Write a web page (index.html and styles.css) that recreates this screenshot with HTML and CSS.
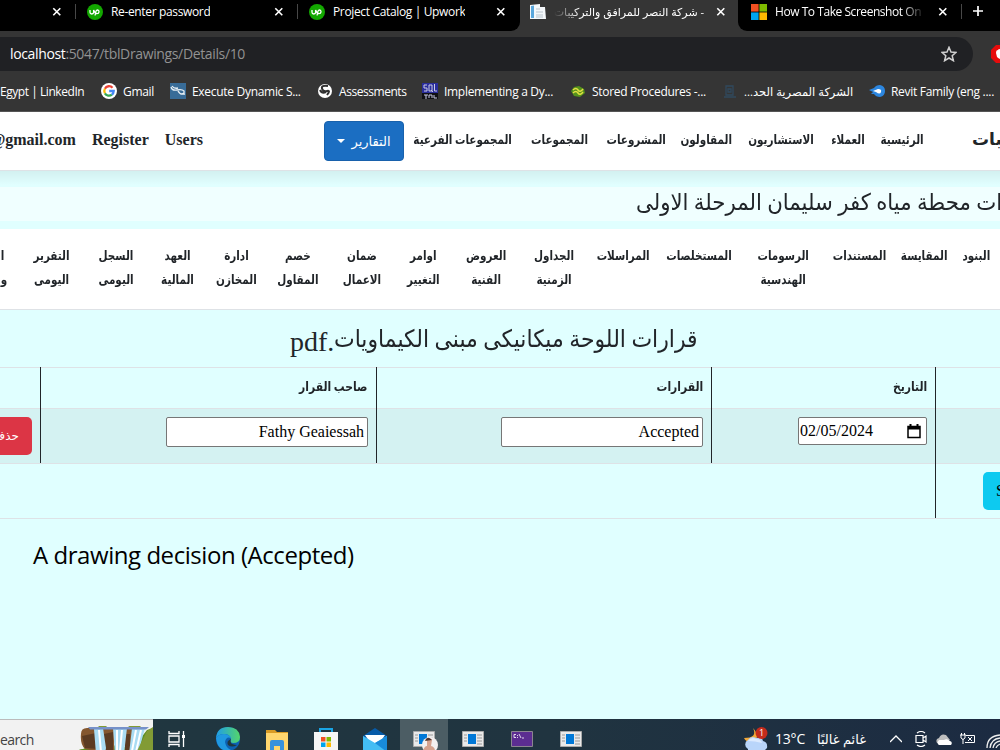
FILE: index.html
```
<!DOCTYPE html>
<html lang="ar">
<head>
  <meta charset="UTF-8">
  <title>شركة النصر للمرافق والتركيبات</title>
  <link rel="stylesheet" href="styles.css">
</head>
<body>
  <svg class="defs" width="0" height="0">
    <symbol id="close" viewBox="0 0 10 10"><path d="M1.3 1.3l7 7M8.3 1.3l-7 7" stroke="#fff" stroke-width="1.6"/></symbol>
    <symbol id="upwork" viewBox="0 0 16 16"><circle cx="8" cy="8" r="8" fill="#13a800"/><path d="M3 6v2.2c0 2.4 3.6 2.4 3.6 0V6c.8 2.4 1.8 3.7 3.4 3.7 2.500 0 2.700-3.700.3-3.700-1.400 0-1.700 1-2.200 5.500" fill="none" stroke="#fff" stroke-width="1.300"/></symbol>
    <symbol id="window" viewBox="0 0 22 16"><path fill="#e9e9e9" stroke="#aaa" d="M.5.5h21v15H.5z"/><path fill="#0078d7" d="M6 3h8v10H6z"/><path d="M2 4h3M2 7h3M2 10h3M15 4h5M15 7h5M15 10h5M15 13h5" stroke="#999"/></symbol>
  </svg>

  <header class="browser">
    <div class="tabs">
      <div class="tab first"><svg class="x"><use href="#close"/></svg></div>
      <div class="tab"><svg class="fav"><use href="#upwork"/></svg><span class="title">Re-enter password</span><svg class="x"><use href="#close"/></svg></div>
      <div class="tab no-line"><svg class="fav"><use href="#upwork"/></svg><span class="title">Project Catalog | Upwork</span><svg class="x"><use href="#close"/></svg></div>
      <div class="tab active">
        <svg class="fav" viewBox="0 0 16 16"><path fill="#f4f8fb" d="M0 1l10-1v3h5l1 12H0z"/><path fill="#5aa7dc" d="M1 2l3-.5V14H1z"/><path d="M6 5h4M6 8h7M6 11h7M6 13h7" stroke="#b9c4cc"/></svg>
        <span class="title ar" dir="rtl">- شركة النصر للمرافق والتركيبات</span><svg class="x"><use href="#close"/></svg>
      </div>
      <div class="tab last">
        <svg class="fav" viewBox="0 0 16 16"><path fill="#f25022" d="M0 0h7.600v7.600H0z"/><path fill="#7fba00" d="M8.400 0H16v7.600H8.400z"/><path fill="#00a4ef" d="M0 8.400h7.600V16H0z"/><path fill="#ffb900" d="M8.400 8.400H16V16H8.400z"/></svg>
        <span class="title fade">How To Take Screenshot On</span><svg class="x"><use href="#close"/></svg>
      </div>
      <svg class="plus" viewBox="0 0 12 12"><path d="M6 1v10M1 6h10" stroke="#fff" stroke-width="1.700"/></svg>
    </div>

    <div class="toolbar">
      <div class="address">
        <span class="url"><b>localhost</b>:5047/tblDrawings/Details/10</span>
        <svg class="star" viewBox="0 0 16 16"><path d="M8 1.300l2 4.700 5 .4-3.800 3.300 1.200 5L8 12l-4.400 2.700 1.200-5L1 6.400 6 6z" fill="none" stroke="#d0d0d0" stroke-width="1.500"/></svg>
      </div>
      <svg class="blocker" viewBox="0 0 18 18"><path fill="#e60c0c" d="M5 0h8l5 5v8l-5 5H5l-5-5V5z"/><path fill="#fff" d="M5 8q0-3 2-3 1-2 3 0 3-1 3 2v5q-3 4-7 0z"/></svg>
    </div>

    <div class="bookmarks">
      <span class="bm b1">Egypt | LinkedIn</span>
      <span class="bm b2"><svg viewBox="0 0 16 16"><circle cx="8" cy="8" r="8" fill="#fff"/><g fill="none" stroke-width="2.300"><path d="M11.500 4.700A4.700 4.700 0 0 0 3.900 5.700" stroke="#ea4335"/><path d="M3.900 5.700a4.700 4.700 0 0 0 0 4.600" stroke="#fbbc05"/><path d="M3.900 10.300a4.700 4.700 0 0 0 7 1.300" stroke="#34a853"/><path d="M10.900 11.600A4.700 4.700 0 0 0 12.700 8H8.200" stroke="#4285f4"/></g></svg>Gmail</span>
      <span class="bm b3"><svg viewBox="0 0 16 16"><path fill="#386c98" d="M0 0h16v16H0z"/><path d="M1 4q1 4 6 3 5-1 7 1 1 3-4 3M2 3q2 3 6 2M8 8q2 4 7 3" fill="none" stroke="#e6eef4" stroke-width="1.300"/></svg>Execute Dynamic S...</span>
      <span class="bm b4"><svg viewBox="0 0 16 16"><circle cx="8" cy="8" r="7" fill="#fff"/><path d="M11 3Q4 2 5 5.500T10 8t0 4M3 7q2 4 6 2" fill="none" stroke="#303030" stroke-width="2"/></svg>Assessments</span>
      <span class="bm b5"><svg viewBox="0 0 16 16"><path fill="#2a2d9b" d="M0 0h16v10H0z"/><path fill="#101014" d="M0 10h16v6H0z"/><path d="M5 2H2v3h3v3H2M7 2h3v6H7zM9 7l2 2M12.500 1v7H15M2 12h4M4 12v4M7 15v-3h3v3M12 12v3h3" fill="none" stroke="#c9cbe4"/></svg>Implementing a Dy...</span>
      <span class="bm b6"><svg viewBox="0 0 16 16"><path fill="#55921c" d="M1 8l3-4 5-1 5 3 1 4-5 4-6-1z"/><path d="M3 7q3-3 5 0t5-1M3 10q3-3 5 0t5-1" fill="none" stroke="#e2df42" stroke-width="1.500"/></svg>Stored Procedures -...</span>
      <span class="bm b7"><svg viewBox="0 0 16 16"><path d="M4 3h7v9H4zM2 14h12M6 6h3v3H6z" fill="none" stroke="#31495e" stroke-width="1.300"/></svg><i dir="rtl">الشركة المصرية الحد...</i></span>
      <span class="bm b8"><svg viewBox="0 0 16 16"><path fill="#2c86df" d="M0 7l5-2q2-3 6-3 5 1 5 6t-5 6q-4 0-6-3H2l2-2z"/><path fill="#fff" d="M4 8l5-2q4 0 3 3t-5 0z"/></svg>Revit Family (eng ....</span>
    </div>
  </header>

  <nav class="navbar">
    <div class="account"><span>@gmail.com</span><span>Register</span><span>Users</span></div>
    <div class="menu" dir="rtl">
      <strong class="brand">يبات</strong>
      <a>الرئيسية</a>
      <a>العملاء</a>
      <a>الاستشاريون</a>
      <a>المقاولون</a>
      <a>المشروعات</a>
      <a>المجموعات</a>
      <a>المجموعات الفرعية</a>
      <button class="reports">التقارير <i class="caret"></i></button>
    </div>
  </nav>

  <section class="project"><h2><span dir="rtl">ات محطة مياه كفر سليمان المرحلة الاولى</span></h2></section>

  <nav class="subnav" dir="rtl">
    <a>البنود</a>
    <a>المقايسة</a>
    <a>المستندات</a>
    <a>الرسومات<br>الهندسية</a>
    <a>المستخلصات</a>
    <a>المراسلات</a>
    <a>الجداول<br>الزمنية</a>
    <a>العروض<br>الفنية</a>
    <a>اوامر<br>التغيير</a>
    <a>ضمان<br>الاعمال</a>
    <a>خصم<br>المقاول</a>
    <a>ادارة<br>المخازن</a>
    <a>العهد<br>المالية</a>
    <a>السجل<br>اليومى</a>
    <a>التقرير<br>اليومى</a>
    <a class="cut">ا<br>و</a>
  </nav>

  <main>
    <h3 dir="rtl"><span class="name">قرارات اللوحة ميكانيكى مبنى الكيماويات</span><span dir="ltr">pdf.</span></h3>
    <div class="row head">
      <div></div>
      <div><span>صاحب القرار</span></div>
      <div><span>القرارات</span></div>
      <div><span>التاريخ</span></div>
      <div></div>
    </div>
    <div class="row data">
      <div><button class="delete">حذف</button></div>
      <div><span class="field">Fathy Geaiessah</span></div>
      <div><span class="field">Accepted</span></div>
      <div><span class="field date">02/05/2024<svg viewBox="0 0 14 15"><path d="M1 2.500h12v11H1z" fill="none" stroke="#000" stroke-width="1.500"/><path d="M1 2h12v3.500H1zM2.500 0h2v3h-2zM9.500 0h2v3h-2z"/></svg></span></div>
      <div></div>
    </div>
    <div class="row save">
      <div></div>
      <div><button class="submit">Save</button></div>
    </div>
    <p class="caption">A drawing decision (Accepted)</p>
  </main>

  <footer class="taskbar">
    <div class="search"><span>earch</span>
      <svg viewBox="0 0 76 28"><path fill="#5f8f25" d="M0 28q0-5 6-5l14-6 36 5L70 4l6-2v26z"/><path fill="#84572f" d="M4 8q0-6 6-6h12l2 24-16-3Q3 18 4 8zM25 2h12v22H26zM48 2h8v24h-8z"/><path fill="#5b3b22" d="M5 10l14-3 2 16-13-1zM27 8l9-2v18h-9zM48 8h5v16h-5z"/><path fill="#a9dcf3" d="M17 3l9-1 3 20-1 6h-9zM36 2h14l-3 26h-9zM55 2h13l-7 26h-9z"/><path d="M22 4l2 22M40 4v22M45 4l-2 21M59 4l-4 21M64 4l-5 22" stroke="#fff" stroke-width="2"/><path fill="#7691c9" d="M11 1h61l-3 2.500H13z"/><path fill="#829b35" d="M21 1q5-5 9 0zM51 1q8-6 13 0zM70 5l6-4v24H60z"/></svg>
    </div>
    <div class="apps">
      <svg class="task" viewBox="0 0 18 16"><path d="M1 0v2.500h10V0M1 5h10v6H1zM1 16v-2.500h10V16M15.500 0v16" fill="none" stroke="#fff" stroke-width="1.300"/><path fill="#fff" d="M14 4h3v3h-3z"/></svg>
      <svg class="edge" viewBox="0 0 24 24"><defs><linearGradient id="eg"><stop stop-color="#1f9de8"/><stop offset="1" stop-color="#54d66a"/></linearGradient></defs><circle cx="12" cy="12" r="12" fill="#0d61b2"/><path fill="url(#eg)" d="M0 11Q1 0 12 0t12 10q0 6-7 6-4-1-2-4-1-5-7-5-5 0-8 4z"/><path fill="#2099e1" d="M0 11q3-4 8-4 5 0 7 4-5-2-6 4 1 6 6 8Q2 26 0 11z"/><path fill="#203740" d="M15 12q-5 2-3 6 4 3 9 0-5-.5-6-2-1-2 0-4z"/></svg>
      <svg class="folder" viewBox="0 0 22 20"><path fill="#d99b25" d="M0 0h9l2 2h11v4H0z"/><path fill="#ffd66e" d="M0 3h22v17H0z"/><path fill="#3892dc" d="M4 20v-8q0-2 2-2h10q2 0 2 2v8h-4v-4H8v4z"/></svg>
      <svg class="store" viewBox="0 0 24 24"><path d="M6 6V1h12v5" fill="none" stroke="#1aa5e5" stroke-width="2"/><path fill="#f5f5f5" d="M0 4h24v18q0 2-2 2H2q-2 0-2-2z"/><path fill="#f25022" d="M7 9h4.500v4.500H7z"/><path fill="#7fba00" d="M12.500 9H17v4.500h-4.500z"/><path fill="#00a4ef" d="M7 14.500h4.500V19H7z"/><path fill="#ffb900" d="M12.500 14.500H17V19h-4.500z"/></svg>
      <svg class="mail" viewBox="0 0 24 24"><path fill="#075ba8" d="M0 8l12-8 12 8v8H0z"/><path fill="#fff" d="M2 7h20l-6 9H8z"/><path fill="#43bdf4" d="M0 8l12 7 12-7v16H0z"/><path fill="#188bdb" d="M12 15l12-7v16z"/></svg>
      <span class="open"><svg viewBox="0 0 26 22"><use href="#window" width="22" height="16"/><circle cx="17" cy="14" r="8" fill="#f4f0f0"/><path fill="#d6a28e" d="M10 21q1-6 4-6v-6q3-3 5 0l-1 6q4 1 4 5l-5 2z"/><path fill="#4d3530" d="M12 10q2-6 7-1z"/></svg></span>
      <svg class="win w1"><use href="#window"/></svg>
      <svg class="win w2" viewBox="0 0 22 16"><path fill="#5c2d91" stroke="#8b8590" d="M.5.500h21v15H.5z"/><path d="M5 3.500H3v3h2M6.500 4v1M6.500 6v1M8 3l2 4M11 7h2" fill="none" stroke="#fff" stroke-width=".8"/></svg>
      <svg class="win w3"><use href="#window"/></svg>
    </div>
    <div class="tray">
      <svg class="weather" viewBox="0 0 25 24"><path fill="#f2a93a" d="M10 1q5 10-9 10 2 5 9 4 8-5 0-14z"/><path fill="#b9d5fa" d="M5 22a5 5 0 0 1 0-9q3-5 8-2 6-2 7 3 5 1 4 7l-3 3H5z"/><path fill="#dceafe" d="M5 14q4-5 8-2 5 0 6 4-7-2-14-2z"/><circle cx="18.500" cy="6" r="6" fill="#c42b1c"/><text x="16" y="9" class="badge">1</text></svg>
      <span class="temp">13°C</span><span class="sky" dir="rtl">غائم غالبًا</span>
      <svg class="chev" viewBox="0 0 12 8"><path d="M0 7l6-6 6 6" fill="none" stroke="#fff" stroke-width="1.300"/></svg>
      <svg class="meet" viewBox="0 0 12 16"><path d="M1 4.500h7v7H1zM8 7l3-2v6L8 9M2 2q4-3 8 0M2 14q4 3 8 0" fill="none" stroke="#fff" stroke-width="1.200"/></svg>
      <svg class="cloud" viewBox="0 0 16 11"><path fill="#bdbdbd" d="M1 9q-2-4 2-5 2-5 7-3l4 5-8 3z"/><path fill="#fff" d="M3 11q-3-2 0-5l5 0q3-2 6 1 3 1 1 4z"/></svg>
      <svg class="power" viewBox="0 0 16 12"><path d="M1 2v3q2 3 4 0V2M0 2h6M1.500 0v2M4.500 0v2M3 6v5M6 2.500h8.500v7H5M8 4l4 4M12 4L8 8" fill="none" stroke="#fff"/></svg>
      <svg class="wifi" viewBox="0 0 14 14"><path d="M1 14Q1 2 14 1M4 14Q5 5 14 4M7 14q1-6 7-7M10 14q1-3 4-4" fill="none" stroke="#eee" stroke-width="1.300"/></svg>
    </div>
  </footer>
</body>
</html>
```
FILE: styles.css
```
* {
  box-sizing: border-box;
}

body {
  margin: 0;
  width: 1000px;
  height: 750px;
  overflow: hidden;
  display: flex;
  flex-direction: column;
  background-color: #e0ffff;
  color: #212529;
  font-family: "Liberation Serif", "DejaVu Sans", serif;
}

svg {
  display: block;
  flex: none;
}

.defs {
  position: absolute;
}

/* browser */
.browser {
  height: 112px;
  flex: none;
  background-color: #353535;
  border-bottom: 1px solid #555;
  color: #fff;
  font-family: "Open Sans", "DejaVu Sans", sans-serif;
  font-size: 12px;
}

.tabs {
  display: flex;
  height: 31px;
  background: linear-gradient(to right, #353535 750px, #000 750px);
}

.tab {
  width: 222px;
  height: 31px;
  flex: none;
  padding: 0 14px 8px 11px;
  display: flex;
  align-items: center;
  background: linear-gradient(#484848, #484848) right 4px / 1px 15px no-repeat #000;
}

.tab.first {
  width: 76px;
}

.tab.no-line {
  background: #000;
  border-radius: 0 0 9px 0;
}

.tab.active {
  width: 218px;
  background: #353535;
  padding-left: 10px;
  padding-right: 12px;
}

.tab.last {
  width: 224px;
  padding-left: 13px;
  border-radius: 0 0 0 9px;
}

.fav {
  width: 16px;
  height: 16px;
  margin-right: 8px;
}

.x {
  width: 10px;
  height: 10px;
  margin-left: auto;
}

.title {
  white-space: nowrap;
  overflow: hidden;
  letter-spacing: -0.35px;
}

.title.ar {
  width: 150px;
  font-size: 11px;
  letter-spacing: 0;
  mask-image: linear-gradient(to right, transparent, #000 25px);
}

.title.fade {
  width: 150px;
  letter-spacing: -0.45px;
  mask-image: linear-gradient(to left, transparent, #000 24px);
}

.plus {
  width: 12px;
  height: 12px;
  margin: 5px 0 0 10px;
}

.toolbar {
  display: flex;
  padding-top: 6px;
  height: 45px;
}

.address {
  width: 973px;
  height: 34px;
  flex: none;
  padding: 0 16px 1px 10px;
  display: flex;
  align-items: center;
  justify-content: space-between;
  background-color: #202124;
  border-radius: 0 17px 17px 0;
}

.url {
  font-size: 14px;
  color: #929292;
  letter-spacing: -0.36px;
}

.url b {
  font-weight: normal;
  color: #fff;
}

.star {
  width: 16px;
  height: 16px;
}

.blocker {
  width: 18px;
  height: 18px;
  margin: 8px 0 0 18px;
}

.bookmarks {
  display: grid;
  grid-template-columns: 101px 69px 147px 105px 148px 152px 147px 131px;
  height: 30px;
  align-items: center;
}

.bm {
  display: flex;
  align-items: center;
  white-space: nowrap;
  letter-spacing: -0.3px;
}

.b1,
.b4 {
  letter-spacing: -0.45px;
}

.bm svg {
  width: 16px;
  height: 16px;
  margin-right: 6px;
}

.bm i {
  font-style: normal;
  font-size: 11.5px;
  letter-spacing: 0;
}

/* site navigation */
.navbar {
  height: 59px;
  flex: none;
  display: flex;
  justify-content: space-between;
  background-color: #fff;
  border-bottom: 1px solid #dee2e6;
  font-weight: bold;
}

.account {
  display: flex;
  gap: 16px;
  width: 203px;
  justify-content: flex-end;
  padding-top: 19px;
  font-size: 16px;
}

.menu {
  display: grid;
  grid-template-columns: 68px 59px 51px 83px 65px 76px 76px 118px 80px;
  font-size: 13px;
  line-height: 56px;
  white-space: nowrap;
}

/* the Arabic face is wide, so labels are condensed */
.menu a,
.subnav a {
  justify-self: center;
  transform: scaleX(0.8);
}

.brand {
  font-size: 17px;
  direction: ltr;
  text-align: left;
  padding-left: 40px;
}

.reports {
  width: 80px;
  height: 40px;
  margin: 9px 0 0;
  padding: 0;
  border: 1px solid #1861ac;
  border-radius: 4px;
  background-color: #1b6ec2;
  color: #fff;
  font: 13px "DejaVu Sans", sans-serif;
}

.caret {
  display: inline-block;
  margin: 0 2px 3px 0;
  border: 4px solid transparent;
  border-top-color: #fff;
  border-bottom: 0;
}

.project {
  height: 58px;
  flex: none;
  padding-top: 16px;
  background: linear-gradient(rgba(0, 0, 0, 0.06), transparent 14px);
}

.project h2 {
  margin: 0;
  height: 34px;
  padding-left: 636px;
  background-color: #f0ffff;
  font-size: 23px;
  font-weight: normal;
  line-height: 31px;
  white-space: nowrap;
}

.project h2 span {
  display: inline-block;
  transform: scaleX(0.925);
  transform-origin: left;
}

.subnav {
  height: 81px;
  flex: none;
  display: grid;
  grid-template-columns: 42px 62px 67px 86px 82px 69px 70px 66px 60px 62px 66px 57px 62px 60px 68px 18px;
  padding: 15px 3px 0 0;
  background-color: #fff;
  border-bottom: 1px solid #dee2e6;
  font-size: 13px;
  font-weight: bold;
  line-height: 24px;
  text-align: center;
  white-space: nowrap;
}

.subnav .cut {
  direction: ltr;
  text-align: left;
  justify-self: end;
}

/* decisions */
main {
  height: 409px;
  flex: none;
}

h3 {
  margin: 0;
  height: 57px;
  padding: 8px 0 0 290px;
  display: flex;
  justify-content: flex-end;
  font-size: 28px;
  font-weight: normal;
  line-height: 48px;
  white-space: nowrap;
}

h3 [dir="ltr"] {
  display: flex;
  flex-direction: row;
  unicode-bidi: isolate;
}

h3 .name {
  font-size: 24px;
  line-height: 43px;
  transform: scaleX(0.915);
  transform-origin: left;
}

.row {
  display: grid;
  grid-template-columns: 41px 336px 335px 224px 64px;
  border-top: 1px solid #dee2e6;
  direction: ltr;
}

.row div {
  margin-top: -1px;
  padding: 9px 8px 8px;
  text-align: right;
  border-right: 1px solid #212529;
}

.row div:last-child {
  border-right: 0;
}

.head {
  height: 41px;
  font-size: 13px;
  font-weight: bold;
  line-height: 22px;
}

.head span {
  display: inline-block;
  transform: scaleX(0.83);
  transform-origin: right;
}

.data {
  height: 55px;
  background-color: #d4f2f2;
}

.data div {
  display: flex;
  justify-content: flex-end;
  align-items: flex-start;
}

.save {
  grid-template-columns: 936px 64px;
  height: 56px;
  border-bottom: 1px solid #dee2e6;
}

.row .delete,
.row .submit {
  width: 58px;
  height: 38px;
  flex: none;
  border: 0;
  border-radius: 5px;
  background-color: #dc3545;
  color: #fff;
  font: 12px "DejaVu Sans", sans-serif;
}

.row .delete {
  padding: 0 13px;
  text-align: right;
}

.row .submit {
  display: block;
  margin-left: 39px;
  padding: 0 13px;
  background-color: #0dcaf0;
  color: #000;
  text-align: left;
  font: 16px "Liberation Serif", serif;
}

.field {
  width: 202px;
  height: 30px;
  padding: 0 3px;
  border: 1px solid #767676;
  border-radius: 2px;
  background-color: #fff;
  color: #000;
  font-size: 16px;
  line-height: 28px;
}

.field.date {
  width: 129px;
  height: 28px;
  padding: 0 5px 0 1px;
  display: flex;
  align-items: center;
  justify-content: space-between;
}

.date svg {
  width: 14px;
  height: 15px;
}

.caption {
  margin: 19px 0 0 33px;
  color: #000;
  font: 24px/34px "Open Sans", sans-serif;
  letter-spacing: -0.45px;
}

/* taskbar */
.taskbar {
  height: 31px;
  flex: none;
  display: flex;
  overflow: hidden;
  background: linear-gradient(to right, #203740, #203440 55%, #1c2b42);
  color: #fff;
  font-family: "Open Sans", "DejaVu Sans", sans-serif;
}

.search {
  width: 153px;
  height: 31px;
  display: flex;
  background-color: #f2f2f2;
  border-top: 1px solid #bbb;
  color: #444;
  font-size: 14px;
  line-height: 40px;
}

.search span {
  width: 77px;
  letter-spacing: -0.6px;
}

.search svg {
  width: 76px;
  height: 28px;
  margin-top: 6px;
}

.apps {
  display: flex;
  width: 592px;
}

.task {
  width: 18px;
  height: 16px;
  margin: 12px 0 0 15px;
}

.edge {
  width: 24px;
  height: 24px;
  margin: 8px 0 0 30px;
}

.folder {
  width: 22px;
  height: 20px;
  margin: 11px 0 0 26px;
}

.store {
  width: 24px;
  height: 24px;
  margin: 9px 0 0 26px;
}

.mail {
  width: 24px;
  height: 24px;
  margin: 9px 0 0 25px;
}

.open {
  width: 48px;
  height: 31px;
  margin-left: 13px;
  padding: 12px 0 0 13px;
  background-color: #4c5d64;
}

.open svg {
  width: 26px;
  height: 22px;
}

.win {
  width: 22px;
  height: 16px;
  margin: 12px 0 0 14px;
}

.w2,
.w3 {
  margin-left: 27px;
}

.tray {
  flex: 1;
  display: flex;
  white-space: nowrap;
  font-size: 14px;
  line-height: 40px;
}

.weather {
  width: 25px;
  height: 24px;
  margin-top: 8px;
}

.badge {
  font-size: 9px;
  fill: #fff;
}

.temp {
  width: 38px;
  margin-left: 7px;
  letter-spacing: -0.2px;
}

.sky {
  width: 53px;
  font-size: 13px;
}

.chev {
  width: 12px;
  height: 8px;
  margin: 16px 0 0 24px;
}

.meet {
  width: 12px;
  height: 16px;
  margin: 12px 0 0 13px;
}

.cloud {
  width: 16px;
  height: 11px;
  margin: 15px 0 0 9px;
}

.power {
  width: 16px;
  height: 12px;
  margin: 14px 0 0 8px;
}

.wifi {
  width: 14px;
  height: 14px;
  margin: 15px 0 0 10px;
}
```
